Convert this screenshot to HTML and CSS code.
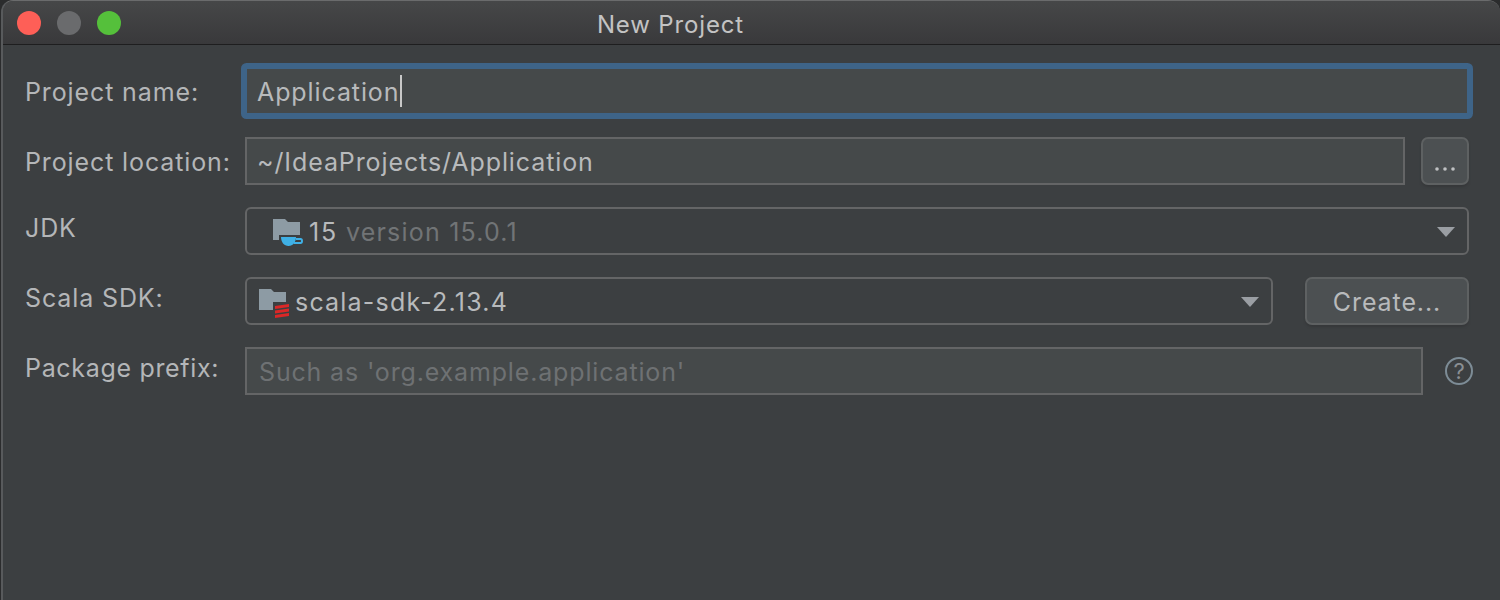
FILE: index.html
```html
<!DOCTYPE html>
<html lang="en">
<head>
<meta charset="utf-8">
<title>New Project</title>
<link rel="stylesheet" href="styles.css">
</head>
<body>
<div class="window">
  <header class="titlebar">
    <div class="lights">
      <span class="light red"></span>
      <span class="light gray"></span>
      <span class="light green"></span>
    </div>
    <div class="title">New Project</div>
  </header>
  <main class="form">
    <div class="row">
      <label class="label">Project name:</label>
      <div class="field focused"><span class="value">Application</span><span class="caret"></span></div>
    </div>
    <div class="row">
      <label class="label">Project location:</label>
      <div class="field"><span class="value">~/IdeaProjects/Application</span></div>
      <button class="btn btn-dots"><svg width="20" height="4" viewBox="0 0 20 4"><circle cx="2" cy="2" r="1.8"/><circle cx="10" cy="2" r="1.8"/><circle cx="18" cy="2" r="1.8"/></svg></button>
    </div>
    <div class="row">
      <label class="label label-up">JDK</label>
      <div class="combo combo-jdk">
        <svg class="icon" width="32" height="30" viewBox="0 0 32 30">
          <path class="folder" d="M0 1H12L15 4H27V22H0z"/>
          <path class="gap" d="M6 17H32V30H6z"/>
          <path class="cup" d="M8 19H23C23 24 20 28 15.500 28C11 28 8 24 8 19z"/>
          <path class="cup-handle" d="M23 21h4.500c2 0 2 4 0 4H21"/>
        </svg>
        <span class="value value-jdk">15</span>
        <span class="muted">version 15.0.1</span>
        <span class="arrow"></span>
      </div>
    </div>
    <div class="row">
      <label class="label label-up">Scala SDK:</label>
      <div class="combo combo-scala">
        <svg class="icon" width="32" height="30" viewBox="0 0 32 30">
          <path class="folder" d="M0 1H12L15 4H27V22H0z"/>
          <path class="gap" d="M14 14H32V30H14z"/>
          <path class="stripe" d="M16 18L30 16V19L16 21zM16 22.500L30 20.500V23.500L16 25.500zM16 27L30 25V28L16 30z"/>
        </svg>
        <span class="value">scala-sdk-2.13.4</span>
        <span class="arrow"></span>
      </div>
      <button class="btn btn-create">Create...</button>
    </div>
    <div class="row">
      <label class="label label-up label-prefix">Package prefix:</label>
      <div class="field field-prefix"><span class="placeholder">Such as 'org.example.application'</span></div>
      <svg class="help" width="28" height="28" viewBox="0 0 28 28">
        <circle class="help-ring" cx="14" cy="14" r="13"/>
        <text class="help-mark" x="14" y="22" text-anchor="middle">?</text>
      </svg>
    </div>
  </main>
</div>
</body>
</html>
```
FILE: styles.css
```css
* { box-sizing: border-box; }
html, body { margin: 0; height: 100%; overflow: hidden; background: #2b2c2d; }
body { width: 1500px; height: 600px; font-family: "Inter", "Liberation Sans", sans-serif; }
.window {
  margin-left: 1px;
  height: 600px;
  background: #3c3f41;
  border-left: 2px solid #585a5c;
  border-top: 1px solid #6a6b6c;
  border-top-left-radius: 12px;
  border-top-right-radius: 12px;
  display: flex;
  flex-direction: column;
  overflow: hidden;
}
.titlebar {
  height: 44px;
  flex: none;
  position: relative;
  display: flex;
  align-items: center;
  justify-content: center;
  padding: 3px 162px 0 0;
  background: linear-gradient(#464748, #39393b);
  border-bottom: 1px solid #1e1e1f;
}
.lights { position: absolute; left: 14px; top: 10px; display: flex; gap: 16px; }
.light { width: 24px; height: 24px; border-radius: 50%; }
.red { background: #fe5f57; }
.gray { background: #6a6b6d; }
.green { background: #55c03b; }
.title { color: #c3c3c3; font-size: 24px; letter-spacing: 0.85px; }
.form { display: flex; flex-direction: column; gap: 22px; padding: 22px 31px 0 22px; }
.row { display: flex; align-items: center; height: 48px; }
.label { width: 220px; flex: none; padding-top: 2px; font-size: 25px; color: #b4b6b8; letter-spacing: 0.88px; }
.label-up { padding: 0 0 6px; }
.label-prefix { letter-spacing: 0.68px; }
.field, .combo {
  flex: 1;
  min-width: 0;
  height: 48px;
  display: flex;
  align-items: center;
  padding-top: 2px;
  font-size: 25px;
  letter-spacing: 0.9px;
  color: #b8babc;
  border: 2px solid #646566;
}
.field { background: #45494a; padding-left: 10px; }
.focused { border-color: #3e6488; border-radius: 2px; box-shadow: 0 0 0 4px #3e6488; }
.caret { width: 2px; height: 32px; background: #c8c8c8; margin: -2px 0 0 1px; }
.field-prefix { flex: none; width: 1178px; padding-left: 12px; letter-spacing: 0.84px; }
.placeholder { color: #6e7173; }
.combo { border-radius: 6px; position: relative; letter-spacing: 1.2px; }
.combo-jdk { padding-left: 26px; }
.combo-scala { flex: none; width: 1028px; padding-left: 12px; }
.icon { flex: none; margin: 2px 4px 0 0; }
.value-jdk { margin-right: 8px; letter-spacing: 1.8px; }
.muted { color: #717476; }
.arrow {
  position: absolute;
  right: 12px;
  top: 18px;
  width: 0;
  height: 0;
  border-left: 9px solid transparent;
  border-right: 9px solid transparent;
  border-top: 10px solid #9a9ea3;
}
.folder { fill: #8d9ba4; }
.gap { fill: #3c3f41; }
.cup { fill: #3fb0e5; }
.cup-handle { fill: none; stroke: #3fb0e5; stroke-width: 2; }
.stripe { fill: #db2727; }
.btn {
  flex: none;
  height: 48px;
  background: #4c5052;
  border: 2px solid #5e6162;
  border-radius: 7px;
  font-family: inherit;
  font-size: 25px;
  letter-spacing: 0.9px;
  color: #b8babc;
  padding: 2px 0 0;
  box-shadow: 0 2px 2px #36383a;
}
.btn-dots { width: 48px; margin-left: 16px; display: flex; align-items: flex-end; justify-content: center; padding: 0 0 12px; }
.btn-dots circle { fill: #bfc1c3; }
.btn-create { width: 164px; margin-left: 32px; }
.help { flex: none; margin-left: 22px; }
.help-ring { fill: none; stroke: #7d8c96; stroke-width: 2; }
.help-mark { fill: #8a8f93; font-size: 22px; }
```
